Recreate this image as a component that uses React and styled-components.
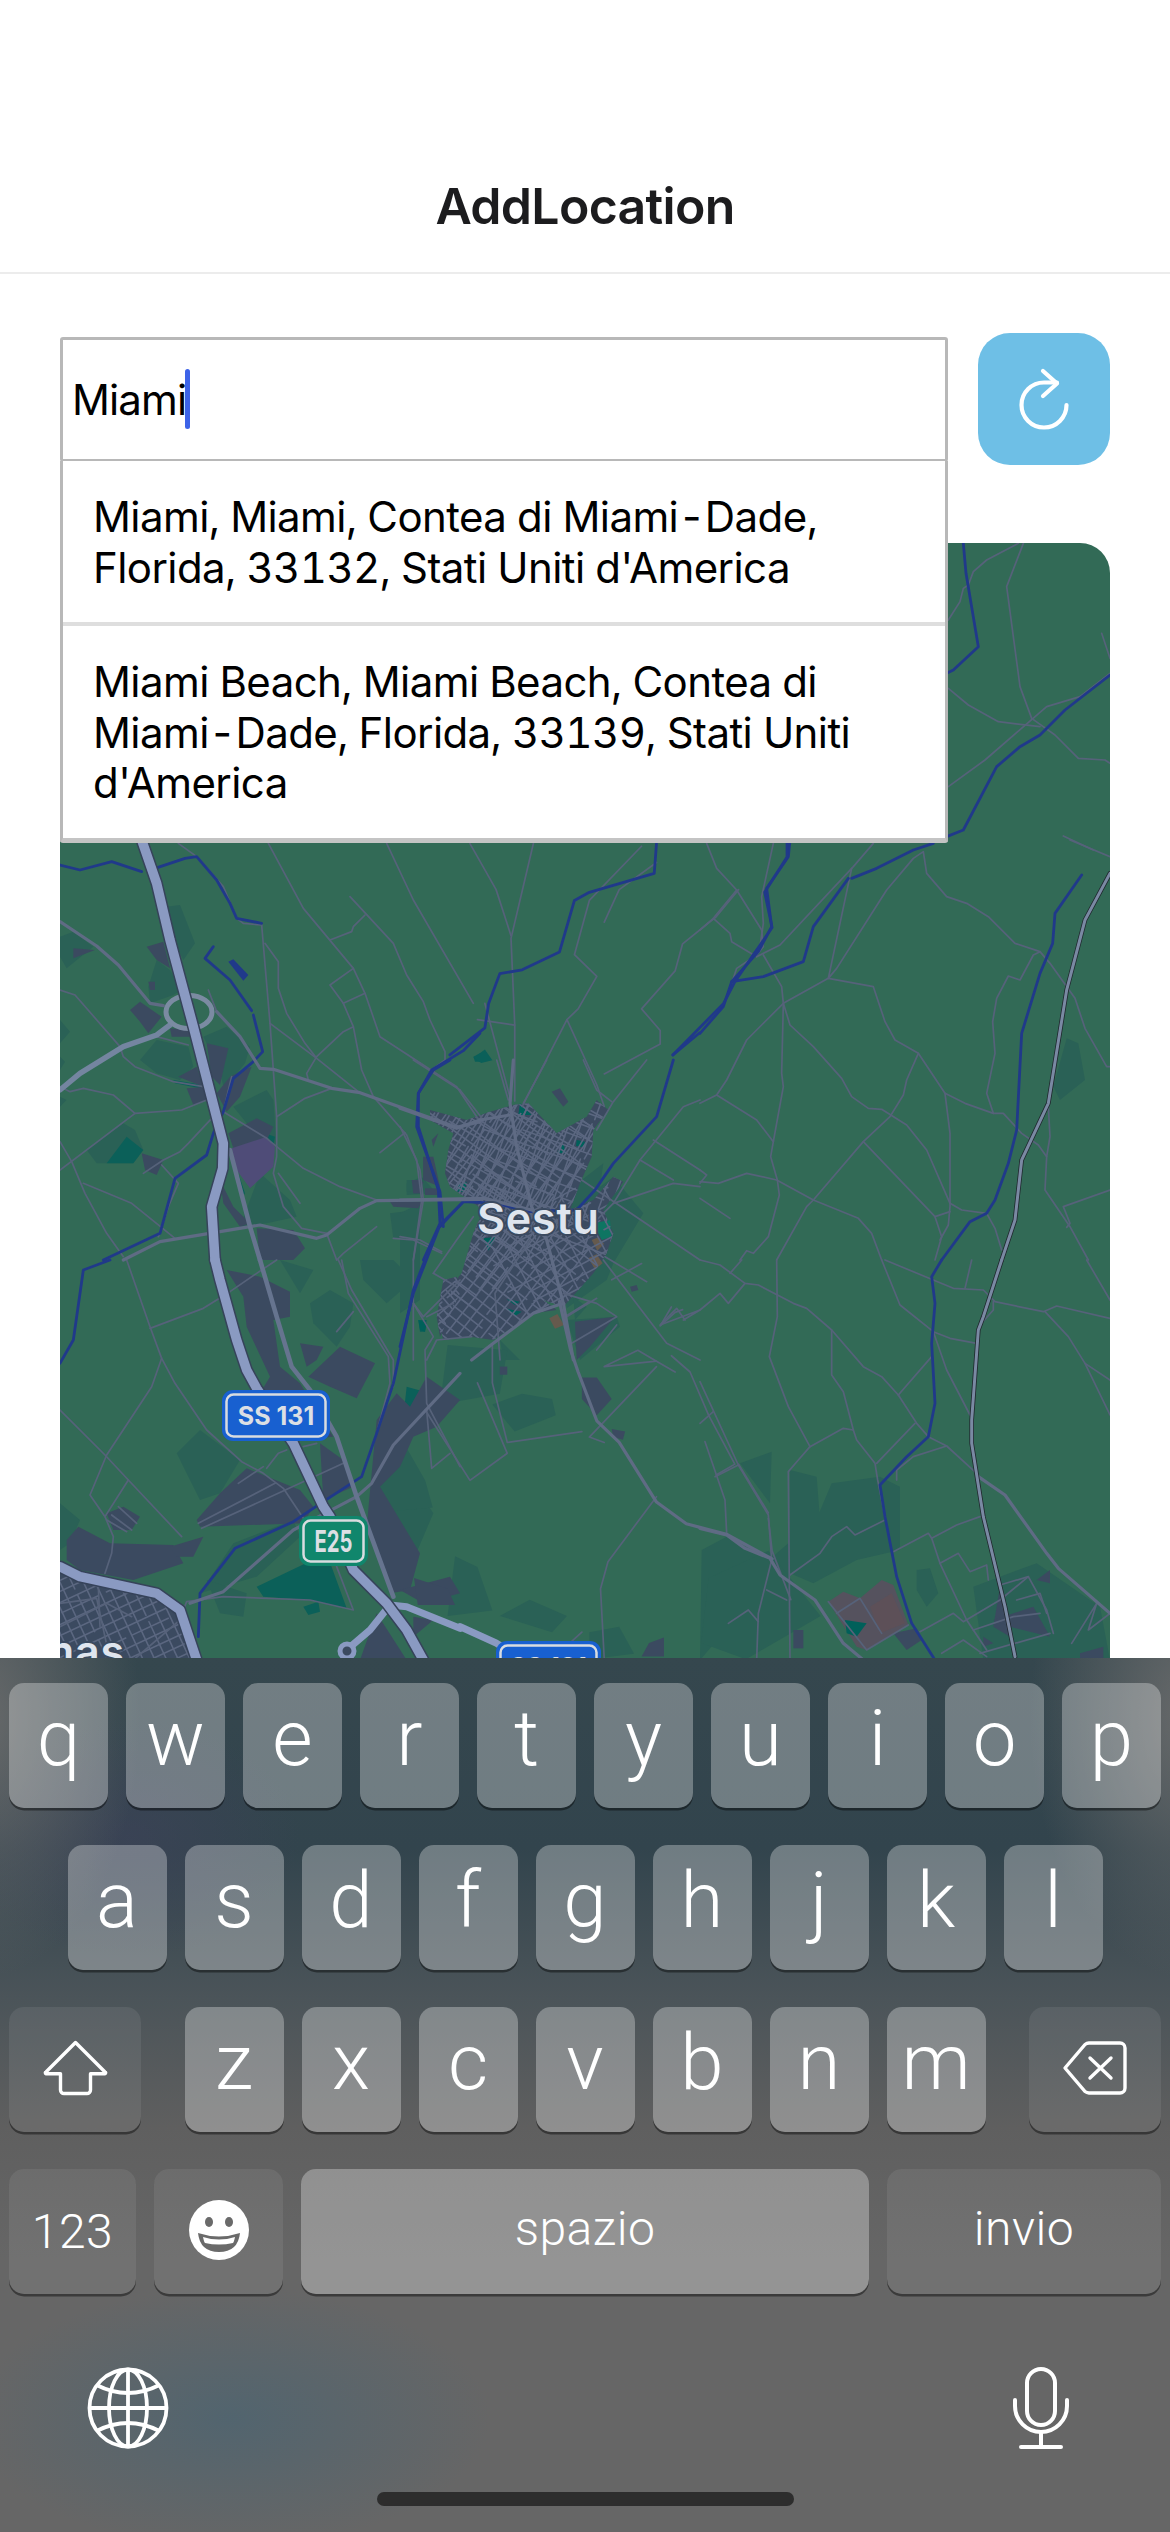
import React from "react";
import styled, { createGlobalStyle } from "styled-components";

const Global = createGlobalStyle`
  html, body { margin: 0; padding: 0; background: #fff; }
  * { box-sizing: border-box; }
`;

const Screen = styled.div`
  width: 1170px; height: 2532px; overflow: hidden; display: flex; flex-direction: column;
  background: #fff; font-family: Inter, "Noto Sans", sans-serif;
`;
const Header = styled.header`
  flex: none; height: 274px; display: flex; align-items: flex-end; justify-content: center;
  padding-bottom: 35px; border-bottom: 2px solid #ececec;
`;
const Title = styled.h1`
  margin: 0; font-size: 50px; line-height: 62px; font-weight: 600; color: #1c1c1e; letter-spacing: -0.7px;
`;
const Main = styled.main`
  flex: 1; min-height: 0; position: relative; overflow: hidden; padding: 59px 60px 0;
`;
const SearchRow = styled.div`
  display: flex; align-items: center; gap: 30px;
`;
const Field = styled.div`
  width: 888px; height: 125px; border: 3px solid #b8b8b8; border-radius: 3px; padding-left: 9px;
  display: flex; align-items: center; font-size: 42px; color: #000; letter-spacing: -0.9px;
`;
const Caret = styled.span`
  display: block; width: 5px; height: 60px; margin-left: -1px; border-radius: 3px; background: #3d63e8;
`;
const RefreshButton = styled.button`
  width: 132px; height: 132px; flex: none; border: 0; border-radius: 32px; background: #6ebfe6; padding: 0;
  display: flex; align-items: center; justify-content: center;
`;
const Suggestions = styled.ul`
  position: absolute; z-index: 2; left: 60px; top: 187px; width: 888px; margin: 0; padding: 0; list-style: none;
  background: #fff; border: 3px solid #b8b8b8; border-top-width: 0; border-bottom: 5px solid #c4c4c4; border-radius: 0 0 3px 3px;
`;
const Suggestion = styled.li`
  padding: 31px 30px 29px;
  font-size: 42px; line-height: 50.5px; color: #000; letter-spacing: -0.58px; font-variant-numeric: tabular-nums;
  border-bottom: ${p => (p.$last ? "0" : "4px solid #dedede")};
`;
const MapPanel = styled.div`
  margin-top: 78px; height: 1115px; border-radius: 30px 30px 0 0; overflow: hidden; background: #326a56;
`;
const MapSvg = styled.svg`
  display: block; width: 1050px; height: 1115px;
`;
const PlaceLabel = styled.text`
  font-family: Inter, sans-serif; font-weight: 600; font-size: 43px; letter-spacing: 0.8px; fill: #dfe5ee;
  paint-order: stroke; stroke: #3b4a60; stroke-width: 4px; stroke-linejoin: round;
`;
const ShieldLabel = styled.text`
  font-family: Inter, sans-serif; font-weight: 700; font-size: ${p => p.$size}px; fill: #dcdfe4; text-anchor: middle;
`;

const Keyboard = styled.div`
  flex: none; height: 874px; display: flex; flex-direction: column; gap: 37px; padding: 25px 9px 25px;
  background:
    radial-gradient(ellipse 260px 130px at 230px 760px, rgba(78,100,112,.85), rgba(78,100,112,0)),
    radial-gradient(ellipse 160px 260px at -20px 60px, rgba(110,110,110,.9), rgba(110,110,110,0)),
    radial-gradient(ellipse 160px 260px at 1190px 60px, rgba(110,110,110,.9), rgba(110,110,110,0)),
    radial-gradient(ellipse 170px 120px at 130px 180px, rgba(61,66,88,.7), rgba(61,66,88,0)),
    linear-gradient(180deg, #35474e 0, #32444d 190px, #4b5459 340px, #5f5f5f 470px, #666 600px, #666 100%);
`;
const KeyRow = styled.div`
  display: flex; gap: 18px; justify-content: ${p => p.$justify || "flex-start"};
`;
const KeyGroup = styled.div`
  display: flex; gap: 18px;
`;
const Key = styled.div`
  width: ${p => p.$w || 99}px; height: 125px; flex: none; border-radius: 15px;
  background: ${p => (p.$special ? "rgba(255,255,255,.075)" : "rgba(255,255,255,.3)")};
  box-shadow: 0 2.5px 0 rgba(0,0,0,.42);
  display: flex; align-items: center; justify-content: center; color: #fff;
  font-family: Roboto, sans-serif; font-weight: 300;
  font-size: ${p => p.$size || 78}px; line-height: 1;
  letter-spacing: ${p => (p.$size ? "0.5px" : "0")};
  padding-bottom: ${p => (p.$pad !== undefined ? p.$pad : p.$size ? 4 : 14)}px;
`;
const ToolRow = styled.div`
  display: flex; align-items: center; justify-content: space-between; padding: 0 91px 0 78px; margin-top: 35px;
`;
const HomeBar = styled.div`
  width: 417px; height: 14px; border-radius: 7px; background: #2d2d2d; margin: 5px auto 0;
`;

/* ---------- map data: each block is traced in a crop of the reference whose origin is `at` ---------- */
const CROPS = [
  { at: [60, 840],
    forest: [
      "320,200 360,195 405,310 370,360 340,300","0,290 40,275 100,320 20,385 0,350","290,360 330,390 365,450 340,465 270,490 265,440",
      "430,590 500,560 570,620 555,670 515,720 490,740 480,690","240,660 290,600 385,620 400,680 360,720 290,700","80,930 190,850 225,870 250,930 220,970 140,970 110,970",
      "520,800 620,750 640,780 650,920 560,850","600,1000 690,1080 710,1130 620,1150 540,1160","990,1120 1070,1110 1070,1190 1000,1195","1040,1030 1085,1010 1130,1060 1040,1065",
      "0,540 30,575 0,610","0,650 15,665 0,690","0,770 20,780 0,800",
    ],
    teal: ["140,970 200,890 250,930 220,970","340,720 430,735 420,745 345,730","1240,650 1260,640 1260,665 1245,665","615,880 645,890 640,915","1185,1030 1220,1025 1210,1055 1190,1055","535,1000 555,1060 545,1075"],
    urban: [
      "260,320 310,305 330,385 290,360","210,510 240,485 305,530 265,580 240,545","40,325 105,330 40,355","265,425 285,425 285,450 270,450",
      "440,610 505,625 480,735 455,710","355,710 410,680 430,740","380,745 435,740 440,780 400,795","470,760 510,710 550,690 575,680 540,770 500,815",
      "505,880 590,835 640,860 620,900 520,925","245,940 310,960 290,1005 255,990","480,1020 520,1100 570,1150 540,1160 490,1090","590,1165 700,1170 735,1225 700,1260 600,1260",
      "1090,950 1125,1010 1090,1020","1055,1020 1085,1020 1080,1060 1060,1060","990,1085 1085,1085 1075,1105 1000,1100","330,565 385,570 390,590 335,590",
    ],
    purple: ["515,925 620,890 645,920 640,980 570,1045 530,990"],
    thin: [
      "625,10 730,205 880,385 915,460 960,590 1190,740 1260,845","980,10 1060,180 1240,490","870,170 1000,310 1040,405 1090,485 1110,540 1155,635 1155,660 1115,690",
      "605,255 630,550 650,830 650,950 640,1000 670,1100 725,1165 800,1180","615,310 655,365 655,445 680,520 735,610 770,655 895,755","630,550 770,655",
      "880,385 810,435 850,490 880,560 905,690 940,770","915,460 850,490","810,300 875,275 880,260 915,225","880,560 850,575 770,650 740,700 745,720","815,745 735,775 650,830",
      "490,815 620,895 730,985 840,1040 950,1080","1035,878 960,938","940,770 1040,885 1080,990 1090,1080 1060,1260","950,1160 850,1240 830,1260",
      "0,450 45,465 180,620 190,650 225,680 340,725 430,740","0,740 30,755 70,745 160,765 225,820 365,810 440,780","225,820 0,990","455,835 385,910 360,935 310,960 250,1000",
      "305,975 355,1030 325,1100 295,1190","0,905 35,965 75,1060 140,1180 190,1250","70,1030 215,1090 345,1195","605,255 550,250 530,235 490,140 410,50 355,10","445,450 470,515","290,590 385,615","490,815 510,730 515,710",
      "800,1180 830,1260","1000,1195 1060,1200 1145,1240","655,1000 720,1090",
    ],
    medium: [
      "0,245 110,318 175,375 270,490 310,497","470,515 540,590 600,685 640,688 815,745 900,758 1190,862 1260,845",
      "1260,1078 950,1082 900,1105 800,1185 770,1195 600,1155 570,1160 300,1205 190,1260",
    ],
    thick: ["0,750 60,700 190,620 290,585 330,555"],
    river: [
      "0,75 60,90 155,65 245,95","285,85 375,55 410,50 470,120 510,190 530,235 605,250","460,320 435,355 510,420 575,512","580,525 608,635 580,665 520,715 490,815 460,880 440,945 345,1015 300,1180 130,1260",
      "1260,580 1210,632 1115,690 1075,760 1075,860 1135,1050 1140,1150 1090,1260","1260,1085 1210,1085 1140,1160",
    ],
    riverFill: ["505,365 520,358 565,405 550,422"],
    grey: ["510,930 570,1160 600,1260"],
    highway: ["245,0 290,130 330,300 400,560 490,910 488,985 455,1100 465,1260"],
  },
  { at: [400, 1060],
    forest: [
      "545,360 610,310 600,380 640,350 730,460 640,610 620,660 500,745 470,500","0,460 60,430 60,720 0,760","20,360 60,360 60,395 20,395","520,710 560,740 525,780",
      "500,780 650,770 660,800 540,900","300,840 360,900 310,900",
    ],
    urban: [
      "90,150 200,180 270,155 340,135 385,130 470,220 560,170 590,120 625,150 580,210 575,290 540,370 510,450 580,420 640,350 670,365 610,450 640,520 620,580 580,640 490,740 430,720 470,750 400,760 280,840 210,830 130,840 115,780 160,740 150,680 185,640 220,520 250,450 150,380 135,340 145,270 160,220 90,180",
      "455,95 480,85 505,125 490,140","525,785 645,770 570,860 530,900","690,680 710,675 715,690 695,695","70,290 100,290 120,380 70,360","40,365 70,365 60,400 40,400","75,385 115,385 115,405 75,405","95,240 115,220 100,260",
    ],
    special: [
      ["360,130 395,165 355,165","#00605a"],["470,280 490,250 498,280","#00605a"],["530,240 555,245 550,262 528,258","#00605a"],["165,375 200,365 195,395 172,395","#00605a"],
      ["250,535 290,530 265,572","#00605a"],["320,718 360,725 345,735","#00605a"],["315,745 365,755 345,768","#00605a"],["55,780 80,790 75,815 60,810","#00605a"],
      ["580,490 630,480 635,530 605,540","#0e7562"],["575,540 595,532 612,552 592,572","#655a4d"],["565,595 590,583 608,610 585,628","#655a4d"],["448,775 472,762 492,795 465,806","#655a4d"],
    ],
    streets: [
      [150, 300, -54, 330, 30],[150, 300, 36, 330, 36],[320, 260, -60, 260, 32],[320, 260, 30, 260, 40],
      [470, 300, -70, 240, 34],[470, 300, 20, 240, 38],[260, 650, -52, 260, 30],[260, 650, 38, 260, 30],[510, 620, -28, 200, 30],[510, 620, 62, 200, 42],
    ],
    clip: "90,150 200,180 270,155 340,135 385,130 470,220 560,170 590,120 625,150 580,210 575,290 540,370 510,450 580,420 640,350 670,365 610,450 640,520 620,580 580,640 490,740 430,720 470,750 400,760 280,840 210,830 130,840 115,780 160,740 150,680 185,640 220,520 250,450 150,380 135,340 145,270 160,220 90,180",
    thin: [
      "545,360 900,600","640,430 820,370 900,380","720,300 820,360","760,240 900,330","900,120 850,140 720,300 640,430 540,530","615,590 740,665","610,600 800,850 900,900","0,200 50,300 65,420 40,600 40,900",
      "290,0 325,120","440,0 370,130","550,0 590,90 635,125","740,0 640,125 590,210","180,90 250,180","40,0 180,90","850,780 900,750 780,795 830,745 855,780","100,640 170,540 220,470","100,640 170,680","0,530 60,540 125,575",
      "80,770 160,730","490,700 590,730 650,770 515,850","80,900 110,840 215,830","500,770 590,715","590,870 650,795","300,900 285,700 390,540",
    ],
    medium: ["0,145 170,205 240,180 330,165","0,420 250,415 395,450","490,730 400,760 280,850 215,900","340,0 330,130 350,260 395,440 440,540 490,730 520,900"],
    river: ["0,860 40,700 120,495 190,425 290,430 385,455 530,450 585,390 640,310 770,170 820,0","130,500 120,395 50,200 55,100 100,30 150,0"],
  },
  { at: [60, 1260],
    forest: [
      "350,580 420,510 540,600 480,700 420,720","750,130 810,90 880,130 870,200 830,260 760,190","0,730 60,780 30,850 0,870","520,850 700,780 720,830 590,950 420,1000","1000,560 1040,640 1120,760 1060,900 950,700",
      "900,0 1000,0 1060,60 980,130 910,60","220,1040 360,1100 300,1200 200,1200","660,0 760,30 720,100","440,960 560,1000 550,1070 480,1060",
    ],
    teal: ["590,980 800,880 860,1045 750,1020 610,1010","1040,380 1110,400 1095,500 1030,470","730,1040 775,1025 780,1055 745,1065","1075,180 1100,180 1095,215 1080,215"],
    urban: [
      "500,30 600,50 690,95 690,170 640,180 660,320 720,370 820,530 700,540 600,400 630,350 560,200 550,110","720,250 790,260 770,300 740,320","745,350 840,260 945,310 890,415 810,380",
      "410,780 480,700 560,625 720,690 760,740 730,790 420,800","780,550 850,600 880,680 790,720","950,480 1010,400 1050,440 1100,350 1200,420 1130,500 1060,530 1020,620 960,680 1080,880 1050,990 990,1000 920,800",
      "20,840 55,800 150,850 340,855 370,910 220,960 60,930 20,900","140,760 190,740 240,770 215,810 160,810","0,940 280,1010 360,1060 400,1200 0,1200",
      "900,1200 950,1060 1040,1200","1020,990 1170,950 1200,1000 1090,1030","1150,60 1190,50 1200,100 1140,230 1130,170","1060,1070 1120,1080 1060,1130","330,860 430,830 400,890 350,890",
    ],
    streets: [[150, 1090, -25, 300, 30],[150, 1090, 65, 300, 32],[1165, 170, -40, 90, 22],[1165, 170, 50, 90, 22]],
    clip: "0,940 280,1010 360,1060 400,1200 0,1200 M1150,60 1190,50 1200,100 1140,230 1130,170",
    thin: [
      "200,0 270,200 305,295 345,370 440,510 545,605 610,640 670,685 730,775","270,205 430,145 510,95 590,40 650,0","305,295 275,380 140,585 90,705 135,770 160,830 155,880 135,940","0,450 135,585 205,660 365,830","205,660 135,770",
      "415,790 645,670","425,805 720,670 850,610","535,670 610,620","620,625 655,580 680,570","730,560 770,550","835,0 875,90 1000,300 1000,380","845,0 865,100 985,290 990,370 950,520","1060,130 1120,230 1095,270 1100,430 1200,620","1100,450 1115,625 1170,580",
      "880,155 830,215","830,920 880,1050 750,1020 490,1010 380,1025 370,1050","1060,130 1090,170 1150,110 1200,60","175,740 230,790","155,765 215,810","140,780 200,815","0,1030 110,1015 150,1200","115,980 120,1100","0,1100 140,1030 215,1070","220,1200 360,1080",
    ],
    medium: ["1200,340 1000,555 935,670 890,710 700,810 490,995 390,1030"],
    grey: ["600,0 650,170 695,320 750,390 830,530 890,710 1000,1010"],
    river: ["0,310 40,240 70,30 150,0","1095,0 1060,90 1000,370 950,520 905,650 790,725 700,785 525,865 420,1000 415,1130"],
    highway: ["465,0 480,60 530,240 560,330 590,385 700,550 790,740 810,770 880,930 980,1030 1040,1110 1090,1200","0,920 60,950 290,1000 360,1050 410,1200"],
    ramp: ["1200,1105 1040,1040 990,1035 930,1110 860,1170"],
  },
  { at: [700, 1260],
    forest: [
      "120,610 215,575 210,730","270,630 350,650 360,780 340,800 395,670 540,650 600,680 600,870 470,900 340,970 270,940","5,870 80,830 210,900 230,880 265,850 270,1000 200,1000 170,1100 60,1130 0,1200",
      "650,930 690,925 715,1000 680,1040 650,990","820,980 900,950 1010,910 1200,1040 1230,1200 850,1200",
    ],
    urban: ["280,1110 310,1110 310,1165 280,1165","580,1120 650,1105 665,1140 620,1170","900,980 930,1130 880,1100","1000,1040 1050,1130 930,1100 880,1080","1010,960 1050,930 1050,970","1140,1180 1210,1160 1210,1200 1140,1200","850,1130 880,1150 850,1160"],
    special: [["385,1025 430,995 480,1015 545,960 580,975 625,1095 500,1170 470,1160","#55525e"],["510,1040 575,1000 615,1090 540,1120","#5d5058"],["435,1080 500,1090 470,1130 440,1120","#00605a"]],
    thin: [
      "0,0 60,15 135,70 175,75 280,130 320,145 395,210 490,320 545,350 595,405 650,490 685,530 740,558 830,640","0,150 60,100 85,130 135,70","90,40 125,0","230,0 232,170 208,290 265,440 330,560 430,505 460,510 470,540 525,610 533,660 555,770",
      "330,560 295,600 265,635 270,1200","395,210 395,345 430,395 460,510","530,610 645,490","595,405 695,290","545,0 600,135 700,215 750,235 830,250","555,0 700,60 760,85 850,90 885,125 1030,155 1070,138 1230,175","700,215 740,330 810,465",
      "880,125 880,150 840,195","815,0 795,85","1160,0 1230,120","1035,155 1105,230 1155,310 1230,465","1155,310 1230,360","0,365 115,615 205,765 215,900 175,1060 170,1200","0,490 40,455","15,545 75,720 80,820","45,650 115,615",
      "270,945 360,880 395,830 440,800 465,825 555,780","580,875 685,820 695,835 770,795 840,770","695,835 720,910 775,880 810,935 860,915 865,960","720,910 800,1080 860,1170","740,558 640,590 590,630 590,660","85,1090 145,1050 175,1085","200,990 260,1020",
      "385,1025 500,1170 625,1095","410,1060 480,1015 545,1120","660,1115 760,1060 790,1085 900,1020 985,950 1040,1050 1060,1120","900,975 985,950","950,1020 1020,1000 1040,1060","820,1110 940,1070 1020,1060","840,1180 1050,1120","1115,1150 1190,1030 1165,1110 1230,1060","725,1180 790,1140 860,1190",
    ],
    medium: ["0,805 80,825 135,865 210,895 240,945 345,1020 430,1150 490,1200","835,650 915,705 1040,880 1075,925 1230,1060"],
    motor: ["905,0 850,170 835,210 815,480 815,550 850,770 915,1040 945,1190"],
    river: ["725,0 695,50 705,130 695,250 705,430 685,530 620,590 540,675 555,770 590,950 635,1090 705,1200"],
  },
  { at: [700, 840],
    forest: ["1100,595 1135,610 1155,720 1080,780 1060,740"],
    thin: [
      "20,10 50,85 110,150 185,270 190,320 170,345 110,385 95,430","220,10 185,170 190,250 180,320","0,270 40,235 110,150","40,235 90,280 95,305 170,350","520,10 460,80 240,315 170,350",
      "455,85 385,415 410,385 560,150 640,55 670,35 680,100 740,170 800,190 865,230 945,310 1020,335 1050,370 1125,475 1155,565 1220,680 1230,680",
      "190,345 245,440 250,490 270,555 340,620 425,715 455,770 505,805 545,808 620,855 680,930 750,1090 785,1110 860,1120 885,1165 905,1230",
      "385,415 520,440 555,545 585,600 655,640 735,760 795,790 880,820 910,820 965,880 1015,915 1040,950 1035,1050 1110,1160 1165,1260",
      "385,415 250,490 140,600 80,720 50,765 0,790","50,765 170,840 220,905","250,490 245,700 250,740 220,905 212,950 232,1020 238,1065 205,1190 160,1240 140,1232 120,1260",
      "655,640 620,720 610,765 570,830 490,905 340,1080 320,1100 230,1260","490,905 705,1130 725,1190 705,1260","735,760 750,880 750,1100 745,1155 720,1200","705,1130 750,1115",
      "0,1025 55,1030 140,1000 230,1020 340,1080 475,1135 515,1180 545,1260","0,990 20,1005 0,1030","0,1075 90,1135","880,820 860,760 885,640 878,545 890,475 925,408 960,420 1000,345 1020,335","1230,1050 1090,1100 1110,1150 1100,1162","1110,0 1230,50","1045,800 1050,890 1040,950",
    ],
    river: [
      "0,580 70,500 95,425 190,410 310,365 340,260 445,115","455,115 530,85 640,30 700,10","95,425 175,335 215,260 200,145 265,50 270,0","1145,105 1065,220 1058,310 1020,400 965,580 950,870 925,970 885,1080 860,1120 810,1145 725,1260",
    ],
    motor: ["1230,100 1155,240 1100,450 1045,790 965,960 945,1140 905,1260"],
  },
  { at: [940, 530],
    thin: ["250,40 200,170 240,470 275,565 345,615 415,685 495,690 510,700","235,40 140,90 100,125 85,165 70,175 60,215 25,270","25,475 85,525 175,575 300,590","25,770 135,690 320,530 420,500 510,430","485,310 510,385","370,918 460,960"],
    river: ["70,40 78,130 115,350 40,420 20,430","510,435 375,540 300,615 240,650 170,710 70,900 20,920"],
  },
  /* the two stretches above and below the town, traced in a crop of 1.34x horizontally and 1.845x vertically */
  { at: [0, 830], scale: [0.746, 0.542],
    forest: [
      "660,1060 700,1040 740,1050 745,1080 690,1110","670,1450 710,1420 760,1450 740,1480","950,1380 1030,1330 1100,1450 1000,1530 940,1500","520,1080 570,1200 580,1250 500,1260","610,1340 640,1360 660,1440 600,1450",
      "790,1480 830,1470 850,1520 790,1530","600,950 680,960 670,1040 590,1060",
    ],
    teal: ["635,420 650,405 660,425 645,430"],
    urban: ["780,1010 800,1010 820,1050 800,1080 780,1050","820,1105 838,1110 835,1125 822,1120","555,1380 600,1400 610,1430 560,1430","870,1500 890,1490 890,1525 860,1525","670,990 680,990 680,1005 670,1005"],
    thin: [
      "715,25 685,200 690,360 690,500","630,25 665,110 685,195","650,320 685,500","860,30 790,130 770,230 800,270 775,330 760,350 800,470 810,510","880,60 830,110 810,170",
      "990,110 960,160 915,210 905,260 860,330 885,370 885,395 810,450","760,350 730,430 700,510","640,350 690,360",
      "660,950 660,1020 680,1130 780,1110","570,1070 630,1200 680,1150 640,1020","810,990 880,980 855,960 810,990","880,990 790,1120 810,1130","880,1230 815,1350 805,1400 810,1530","740,1530 780,1480",
      "900,970 925,1000 950,1080 985,1170 960,1190","990,1170 1030,1260","900,880 885,915 905,890 915,885","755,900 790,870","820,830 860,800","905,1000 880,980","1030,1270 1035,1330 1060,1420",
    ],
    medium: ["750,870 765,960 775,1000 800,1090 830,1130 880,1240 920,1280 975,1300 1035,1345"],
    river: [
      "880,25 877,80 790,115 770,130 750,225 700,258 670,265 655,320 650,365 603,415","1055,25 1055,50 1025,115 1035,180 1010,230 985,280 970,320 902,415","938,374 902,415",
    ],
    ramp: ["617,1470 665,1500 700,1530"],
  },
];

const gridLines = ([cx, cy, deg, size, step]) => {
  const a = (deg * Math.PI) / 180, ux = Math.cos(a), uy = Math.sin(a), lines = [];
  for (let o = -size, i = 0; o <= size; o += step, i++) {
    const mx = cx - uy * o, my = cy + ux * o;
    const s = size * (i % 3 === 0 ? 1 : 0.72), off = i % 4 === 1 ? size * 0.2 : 0;
    lines.push(`${mx - ux * (s - off)},${my - uy * (s - off)} ${mx + ux * (s + off)},${my + uy * (s + off)}`);
  }
  return lines;
};

const Line = ({ pts, color, w, dash }) => (
  <polyline points={pts} fill="none" stroke={color} strokeWidth={w} strokeLinejoin="round" strokeLinecap="round" strokeDasharray={dash} vectorEffect="non-scaling-stroke" />
);

const inCrop = (render) =>
  CROPS.map((c, i) => {
    const [sx, sy] = c.scale || [1 / 3, 1 / 3];
    return <g key={i} transform={`translate(${c.at[0]} ${c.at[1]}) scale(${sx} ${sy})`}>{render(c, i)}</g>;
  });

const fills = (list, color) => (list || []).map((p, j) => <polygon key={j} points={p} fill={color} />);
const strokes = (list, color, w, dash) => (list || []).map((p, j) => <Line key={j} pts={p} color={color} w={w} dash={dash} />);

const Shield = ({ x, y, w, h, fill, children, size, narrow }) => (
  <g>
    <rect x={x} y={y} width={w} height={h} rx="11" fill={fill} />
    <rect x={x + 4.5} y={y + 4.5} width={w - 9} height={h - 9} rx="7" fill={fill} stroke="#d8dce0" strokeWidth="2.5" />
    <ShieldLabel x={x + w / 2} y={y + h / 2 + size * 0.36} $size={size} {...(narrow ? { textLength: narrow, lengthAdjust: "spacingAndGlyphs" } : {})}>{children}</ShieldLabel>
  </g>
);

const MapDrawing = () => (
  <MapSvg viewBox="60 543 1050 1115">
    <defs>
      {CROPS.map((c, i) => c.clip && (
        <clipPath key={i} id={`town${i}`}>
          {c.clip.split(" M").map((s, j) => <polygon key={j} points={s} />)}
        </clipPath>
      ))}
    </defs>
    {inCrop(c => fills(c.forest, "#2a6156"))}
    {inCrop(c => fills(c.teal, "#0b6059"))}
    {inCrop(c => fills(c.urban, "#3b4a60"))}
    {inCrop(c => fills(c.purple, "#4f4c78"))}
    {inCrop(c => (c.special || []).map(([p, col], j) => <polygon key={j} points={p} fill={col} />))}
    {inCrop((c, i) => c.streets && (
      <g clipPath={`url(#town${i})`}>
        {c.streets.flatMap(gridLines).map((p, j) => <Line key={j} pts={p} color="#5b6780" w="1.6" dash={j % 5 === 2 ? "26 7 40 9" : undefined} />)}
      </g>
    ))}
    {inCrop(c => strokes(c.thin, "#56627a", 1.7))}
    {inCrop(c => fills(c.riverFill, "#20398a"))}
    {inCrop(c => strokes(c.river, "#20398a", 2.8))}
    {inCrop(c => strokes(c.medium, "#5f6b84", 3.2))}
    {inCrop(c => strokes(c.grey, "#66748f", 4.6))}
    {inCrop(c => strokes(c.motor, "#20282f", 4.6))}
    {inCrop(c => strokes(c.motor, "#7a89a3", 3))}
    {inCrop(c => strokes(c.thick, "#7485a0", 5.4))}
    <ellipse cx="189" cy="1012" rx="23" ry="16.5" fill="none" stroke="#7b8ba2" strokeWidth="5" />
    {inCrop(c => strokes(c.ramp, "#8a9ac2", 7))}
    {inCrop(c => strokes(c.highway, "#36435a", 12.5))}
    {inCrop(c => strokes(c.highway, "#8a9ac2", 9.5))}
    <circle cx="347" cy="1651" r="7" fill="#3b4a60" stroke="#8a9ac2" strokeWidth="5" />
    <PlaceLabel x="477" y="1234">Sestu</PlaceLabel>
    <PlaceLabel x="125" y="1667" textAnchor="end">mas</PlaceLabel>
    <Shield x={222} y={1390} w={108} h={51} fill="#1860d0" size={25}>SS 131</Shield>
    <Shield x={299} y={1516} w={69} h={50} fill="#10866c" size={30} narrow={38}>E25</Shield>
    <Shield x={496} y={1641} w={105} h={51} fill="#1860d0" size={25}>SS 131</Shield>
  </MapSvg>
);

const RefreshIcon = () => (
  <svg width="60" height="64" viewBox="0 0 60 64" fill="none" stroke="#fff" strokeWidth="4.2" strokeLinecap="round" strokeLinejoin="round">
    <path d="M52.500 38A22.500 22.500 0 1 1 30 15.500H43" />
    <path d="M29 4L43 16.500L29 29" />
  </svg>
);
const ShiftIcon = () => (
  <svg width="65" height="56" viewBox="0 0 65 56" fill="none" stroke="#fff" strokeWidth="3.4" strokeLinejoin="round">
    <path d="M32.500 2.500L62 32a.8.8 0 0 1-.6 1.700H47.500V50a3.500 3.500 0 0 1-3.500 3.500H21a3.500 3.500 0 0 1-3.500-3.500V33.700H3.600A.8.8 0 0 1 3 32Z" />
  </svg>
);
const DeleteIcon = () => (
  <svg width="66" height="56" viewBox="0 0 66 56" fill="none" stroke="#fff" strokeWidth="3.4" strokeLinejoin="round" strokeLinecap="round">
    <path d="M3 28L23 4.500A8 8 0 0 1 27 3H58a5 5 0 0 1 5 5V48a5 5 0 0 1-5 5H27a8 8 0 0 1-4-1.500Z" />
    <path d="M28 18L49 38M49 18L28 38" />
  </svg>
);
const EmojiIcon = () => (
  <svg width="60" height="60" viewBox="0 0 60 60">
    <circle cx="30" cy="30" r="30" fill="#fff" />
    <ellipse cx="20" cy="22" rx="4" ry="5" fill="#6a6a6a" />
    <ellipse cx="40" cy="22" rx="4" ry="5" fill="#6a6a6a" />
    <path d="M9 33Q30 40 51 33Q49 52 30 52Q11 52 9 33Z" fill="#6a6a6a" />
    <path d="M14 37Q30 42 46 37Q45 42 44 43Q30 46 16 43Q15 42 14 37Z" fill="#fff" />
  </svg>
);
const GlobeIcon = () => (
  <svg width="82" height="82" viewBox="0 0 82 82" fill="none" stroke="#fff" strokeWidth="3.8">
    <circle cx="41" cy="41" r="38.500" />
    <ellipse cx="41" cy="41" rx="19" ry="38.500" />
    <path d="M41 2.500V79.500M2.500 41H79.500" />
    <path d="M9.500 18Q41 34 72.500 18M9.500 64Q41 48 72.500 64" />
  </svg>
);
const MicIcon = () => (
  <svg width="58" height="84" viewBox="0 0 58 84" fill="none" stroke="#fff" strokeWidth="4" strokeLinecap="round">
    <rect x="15" y="3" width="28" height="56" rx="14" />
    <path d="M3 34V40A26 26 0 0 0 55 40V34" />
    <path d="M29 66V81M9 81H49" />
  </svg>
);

const LetterKeys = ({ letters }) => letters.split("").map(l => <Key key={l}>{l}</Key>);

export default function App() {
  return (
    <Screen>
      <Global />
      <Header><Title>AddLocation</Title></Header>
      <Main>
        <SearchRow>
          <Field>Miami<Caret /></Field>
          <RefreshButton aria-label="refresh"><RefreshIcon /></RefreshButton>
        </SearchRow>
        <Suggestions>
          <Suggestion>Miami, Miami, Contea di Miami-Dade,<br />Florida, 33132, Stati Uniti d'America</Suggestion>
          <Suggestion $last>Miami Beach, Miami Beach, Contea di<br />Miami-Dade, Florida, 33139, Stati Uniti<br />d'America</Suggestion>
        </Suggestions>
        <MapPanel><MapDrawing /></MapPanel>
      </Main>
      <Keyboard>
        <KeyRow><LetterKeys letters="qwertyuiop" /></KeyRow>
        <KeyRow $justify="center"><LetterKeys letters="asdfghjkl" /></KeyRow>
        <KeyRow $justify="space-between">
          <Key $w={132} $special $size={48}><ShiftIcon /></Key>
          <KeyGroup><LetterKeys letters="zxcvbnm" /></KeyGroup>
          <Key $w={132} $special $size={48}><DeleteIcon /></Key>
        </KeyRow>
        <KeyRow>
          <Key $w={127} $special $size={48} $pad={0}>123</Key>
          <Key $w={129} $special $size={48}><EmojiIcon /></Key>
          <Key $w={568} $size={48} $pad={6}>spazio</Key>
          <Key $w={274} $special $size={48} $pad={6}>invio</Key>
        </KeyRow>
        <ToolRow><GlobeIcon /><MicIcon /></ToolRow>
        <HomeBar />
      </Keyboard>
    </Screen>
  );
}
